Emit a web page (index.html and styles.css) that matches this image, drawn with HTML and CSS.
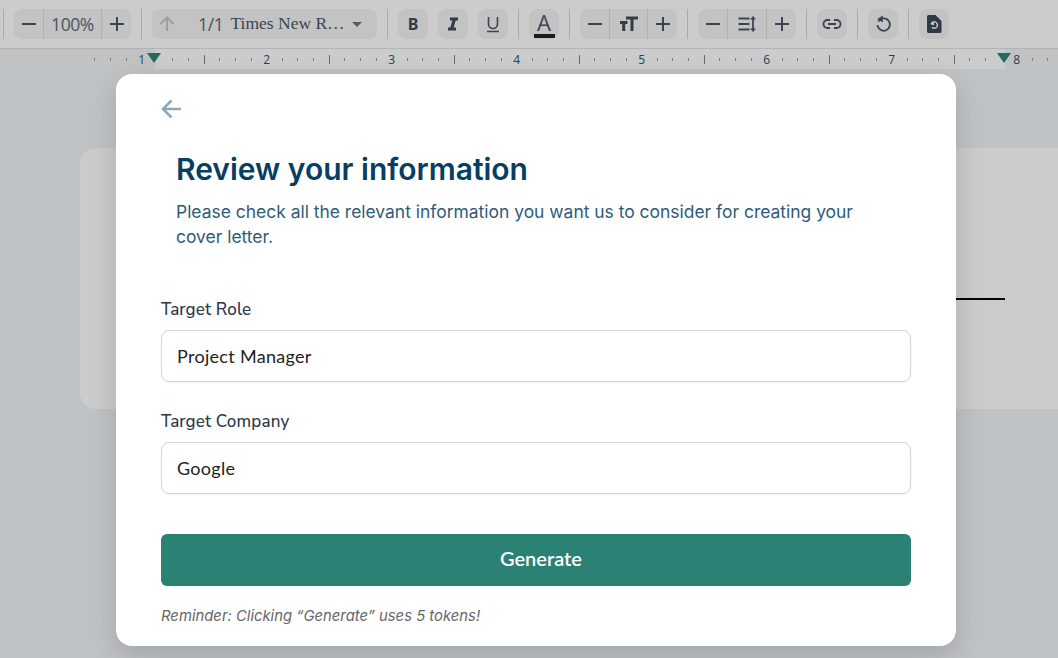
FILE: index.html
```html
<!DOCTYPE html>
<html lang="en">
<head>
<meta charset="utf-8">
<title>Review your information</title>
<link rel="stylesheet" href="styles.css">
</head>
<body>
<div class="app">
  <div class="toolbar">
    <i class="sep first"></i>
    <div class="group zoomgroup">
      <button class="cell w29"><svg class="ic" viewBox="0 0 20 20"><path d="M3 10h14"/></svg></button>
      <span class="cell w58 val">100%</span>
      <button class="cell w30"><svg class="ic" viewBox="0 0 20 20"><path d="M3 10h14M10 3v14"/></svg></button>
    </div>
    <i class="sep"></i>
    <div class="group fontgroup">
      <button class="cell w29"><svg class="ic faint" viewBox="0 0 20 20"><path d="M10 17V3.500M3.500 10 10 3.500l6.500 6.500"/></svg></button>
      <span class="pages">1/1</span>
      <span class="fontname">Times New R…</span>
      <i class="caret"></i>
    </div>
    <i class="sep"></i>
    <button class="tool"><b class="glyph bold">B</b></button>
    <button class="tool"><svg class="ic thick" viewBox="0 0 20 20"><path d="M7 5h8M5 15h8M11.500 5l-3 10"/></svg></button>
    <button class="tool"><svg class="ic thin" viewBox="0 0 20 20"><path d="M5.500 3v7a4.500 4.500 0 0 0 9 0V3M4 17.500h12"/></svg></button>
    <i class="sep"></i>
    <button class="tool colorbtn"><span class="colorA">A</span><i class="colorbar"></i></button>
    <i class="sep"></i>
    <div class="group sizegroup">
      <button class="cell w29"><svg class="ic" viewBox="0 0 20 20"><path d="M3 10h14"/></svg></button>
      <span class="cell w38"><svg class="ic thick" viewBox="0 0 20 20"><path d="M7 4h12M13 4v13M1 8.500h7.500M4.700 8.500V17"/></svg></span>
      <button class="cell w30"><svg class="ic" viewBox="0 0 20 20"><path d="M3 10h14M10 3v14"/></svg></button>
    </div>
    <i class="sep"></i>
    <div class="group linegroup">
      <button class="cell w29"><svg class="ic" viewBox="0 0 20 20"><path d="M3 10h14"/></svg></button>
      <span class="cell w39"><svg class="ic thin2" viewBox="0 0 20 20"><path d="M1.500 4.500h11M1.500 10h11M1.500 15.500h11M16 4v12"/><path class="fill" d="M16 2l3 3.500h-6zM16 18l3-3.500h-6z"/></svg></span>
      <button class="cell w30"><svg class="ic" viewBox="0 0 20 20"><path d="M3 10h14M10 3v14"/></svg></button>
    </div>
    <i class="sep"></i>
    <button class="tool"><svg class="ic thin2" viewBox="0 0 20 20"><path d="M8 6H5.500a4 4 0 0 0 0 8H8M12 6h2.500a4 4 0 0 1 0 8H12M6 10h8"/></svg></button>
    <i class="sep"></i>
    <button class="tool"><svg class="ic thin2" viewBox="0 0 20 20"><path d="M5.300 7.500a6.200 6.200 0 1 1-.8 3.500"/><path class="fill" d="M9.800 1.500v7L4.300 5z"/></svg></button>
    <i class="sep"></i>
    <button class="tool"><svg class="ic" viewBox="0 0 20 20"><path class="solid" d="M4.500 1h7l6 6v10.500a1.500 1.500 0 0 1-1.500 1.500H4.500A1.500 1.500 0 0 1 3 17.500V2.500A1.500 1.500 0 0 1 4.500 1z"/><path class="inv" d="M7.100 10.500a3.200 3.200 0 1 1 .8 2.700"/><path class="invfill" d="M10 7.800v3.800L6.600 9.700z"/></svg></button>
  </div>
  <div class="ruler">
    <i class="margin left"></i>
    <i class="margin right"></i>
    <i class="tri t-left"></i>
    <i class="tri t-right"></i>
    <div class="ticks">
      <i class="s t"></i><i class="s t"></i><i class="s t"></i>
      <span class="s n">1</span><i class="s"></i><i class="s t"></i><i class="s t"></i><i class="s t big"></i><i class="s t"></i><i class="s t"></i><i class="s t"></i>
      <span class="s n">2</span><i class="s t"></i><i class="s t"></i><i class="s t"></i><i class="s t big"></i><i class="s t"></i><i class="s t"></i><i class="s t"></i>
      <span class="s n">3</span><i class="s t"></i><i class="s t"></i><i class="s t"></i><i class="s t big"></i><i class="s t"></i><i class="s t"></i><i class="s t"></i>
      <span class="s n">4</span><i class="s t"></i><i class="s t"></i><i class="s t"></i><i class="s t big"></i><i class="s t"></i><i class="s t"></i><i class="s t"></i>
      <span class="s n">5</span><i class="s t"></i><i class="s t"></i><i class="s t"></i><i class="s t big"></i><i class="s t"></i><i class="s t"></i><i class="s t"></i>
      <span class="s n">6</span><i class="s t"></i><i class="s t"></i><i class="s t"></i><i class="s t big"></i><i class="s t"></i><i class="s t"></i><i class="s t"></i>
      <span class="s n">7</span><i class="s t"></i><i class="s t"></i><i class="s t"></i><i class="s t big"></i><i class="s t"></i><i class="s t"></i><i class="s"></i>
      <span class="s n">8</span><i class="s t"></i><i class="s t"></i>
    </div>
  </div>
  <div class="canvas">
    <div class="sheet"><i class="rule"></i></div>
  </div>
</div>
<div class="overlay"></div>
<section class="modal">
  <button class="back"><svg viewBox="0 0 22 22"><path d="M20 11H2.500M10.500 2.500 2 11l8.500 8.500"/></svg></button>
  <header class="intro">
    <h1>Review your information</h1>
    <p>Please check all the relevant information you want us to consider for creating your cover letter.</p>
  </header>
  <label class="field-label">Target Role</label>
  <div class="input">Project Manager</div>
  <label class="field-label second">Target Company</label>
  <div class="input">Google</div>
  <button class="generate">Generate</button>
  <p class="reminder">Reminder: Clicking “Generate” uses 5 tokens!</p>
</section>
</body>
</html>
```
FILE: styles.css
```css
* { box-sizing: border-box; }
html, body { margin: 0; height: 100%; overflow: hidden; }
body { font-family: "Inter", sans-serif; background: #eff4f8; }
button { border: 0; padding: 0; margin: 0; background: none; font: inherit; color: inherit; }
.app { height: 658px; display: flex; flex-direction: column; }

.toolbar { height: 48px; background: #fff; display: flex; align-items: center; padding: 0 0 0 3px; flex: none; }
.sep { width: 1px; height: 30px; background: #d3d6da; flex: none; margin: 0 10px; }
.sep.first { margin: 0 10px 0 0; }
.group { display: flex; align-items: stretch; height: 30px; background: #f4f4f4; border-radius: 8px; flex: none; }
.cell { display: flex; align-items: center; justify-content: center; border-left: 1px solid #dcdcdc; height: 30px; flex: none; }
.cell:first-child { border-left: 0; }
.w29 { width: 29px; } .w30 { width: 30px; } .w38 { width: 38px; } .w39 { width: 39px; } .w58 { width: 58px; }
.val { font: 17.500px "Open Sans", sans-serif; color: #5c6b7a; letter-spacing: -.4px; }
.fontgroup { width: 225px; align-items: center; }
.pages { font: 17.500px "Open Sans", sans-serif; color: #5c6b7a; margin-left: 17px; letter-spacing: -.3px; }
.fontname { font: 17.500px/20px "Liberation Serif", serif; color: #4a5568; margin-left: 7px; margin-bottom: 2px; white-space: nowrap; }
.caret { width: 0; height: 0; border: 5px solid transparent; border-top: 5px solid #6b7280; border-bottom: 0; margin-left: 7px; }
.tool { width: 30px; height: 30px; border-radius: 8px; background: #f4f4f4; display: flex; align-items: center; justify-content: center; flex: none; margin-right: 10px; }
.tool + .sep { margin-left: 0; }
.ic { width: 20px; height: 20px; fill: none; stroke: #4a5568; stroke-width: 2; display: block; }
.ic.faint { stroke: #c3c6cb; }
.ic.thick { stroke-width: 3; stroke: #3f4a5a; }
.ic.thin { stroke-width: 1.600; }
.ic.thin2 { stroke-width: 1.800; }
.ic .fill { fill: #4a5568; stroke: none; }
.ic .solid { fill: #3c4858; stroke: none; }
.ic .inv { stroke: #f4f4f4; stroke-width: 1.500; }
.ic .invfill { fill: #f4f4f4; stroke: none; }
.glyph.bold { font: 700 16px "Noto Sans", sans-serif; color: #3f4a5a; }
.colorbtn { flex-direction: column; justify-content: flex-start; position: relative; }
.colorA { font: 500 22px/26px "Open Sans", sans-serif; color: #4a5568; }
.colorbar { width: 21px; height: 4px; background: #222; margin-top: -1px; }

.ruler { height: 21px; flex: none; background: #fff; border-top: 1px solid #dde3ea; position: relative; }
.margin { position: absolute; top: 0; bottom: 0; background: #f3f3f3; }
.margin.left { left: 0; width: 155px; }
.margin.right { left: 1005px; right: 0; }
.tri { position: absolute; top: 4px; width: 0; height: 0; border: 7.500px solid transparent; border-top: 10px solid #2d8476; border-bottom: 0; }
.t-left { left: 147px; }
.t-right { left: 997px; }
.ticks { position: relative; display: flex; padding-left: 87px; height: 20px; align-items: center; }
.s { width: 15.625px; flex: none; display: flex; justify-content: center; height: 20px; align-items: center; position: relative; }
.t::before { content: ""; width: 1px; height: 3px; background: #9aa3ad; }
.t.big::before { height: 9px; background: #7d8794; }
.n { font: 12px "Open Sans", sans-serif; color: #24557a; }

.canvas { flex: 1; position: relative; overflow: hidden; }
.sheet { margin: 79px 0 0 80px; width: 1100px; height: 261px; background: #fff; border-radius: 16px; padding: 150px 0 0 0; }
.rule { display: block; margin-left: 425px; width: 500px; height: 2px; background: #000; }

.overlay { position: absolute; inset: 0; background: rgba(0,0,0,.2); }
.modal { position: absolute; left: 116px; top: 74px; width: 840px; height: 572px; background: #fff; border-radius: 16px; padding: 24px 45px 0; box-shadow: 0 10px 30px rgba(0,0,0,.16); display: flex; flex-direction: column; align-items: stretch; }
.back { width: 22px; height: 22px; display: block; }
.back svg { width: 22px; height: 22px; display: block; fill: none; stroke: #8ea6b9; stroke-width: 2.600; }
.intro { padding: 0 15px; margin-top: 29px; }
h1 { margin: 0; font: 600 30px/40px "Inter", sans-serif; color: #073f63; }
.intro p { margin: 10px 0 0; font: 400 17.450px/25px "Inter", sans-serif; color: #2f5b7b; }
.field-label { display: block; margin-top: 49px; font: 500 17px/24px "Nunito Sans", "Lato", sans-serif; color: #2d3748; letter-spacing: .15px; }
.field-label.second { margin-top: 28px; }
.input { margin-top: 8px; height: 52px; border: 1px solid #d3d5dc; border-radius: 8px; padding: 0 15px; font: 400 18px/50px "Lato", sans-serif; color: #222; letter-spacing: .3px; box-shadow: 0 1px 2px rgba(0,0,0,.06); }
.generate { margin-top: 40px; height: 52px; background: #2a8174; color: #fff; border-radius: 6px; font: 600 20px/48px "Lato", sans-serif; text-align: center; padding: 0 0 4px 10px; }
.reminder { margin: 20px 0 0; font: italic 400 14.850px/20px "Inter", sans-serif; color: #666; }
```
